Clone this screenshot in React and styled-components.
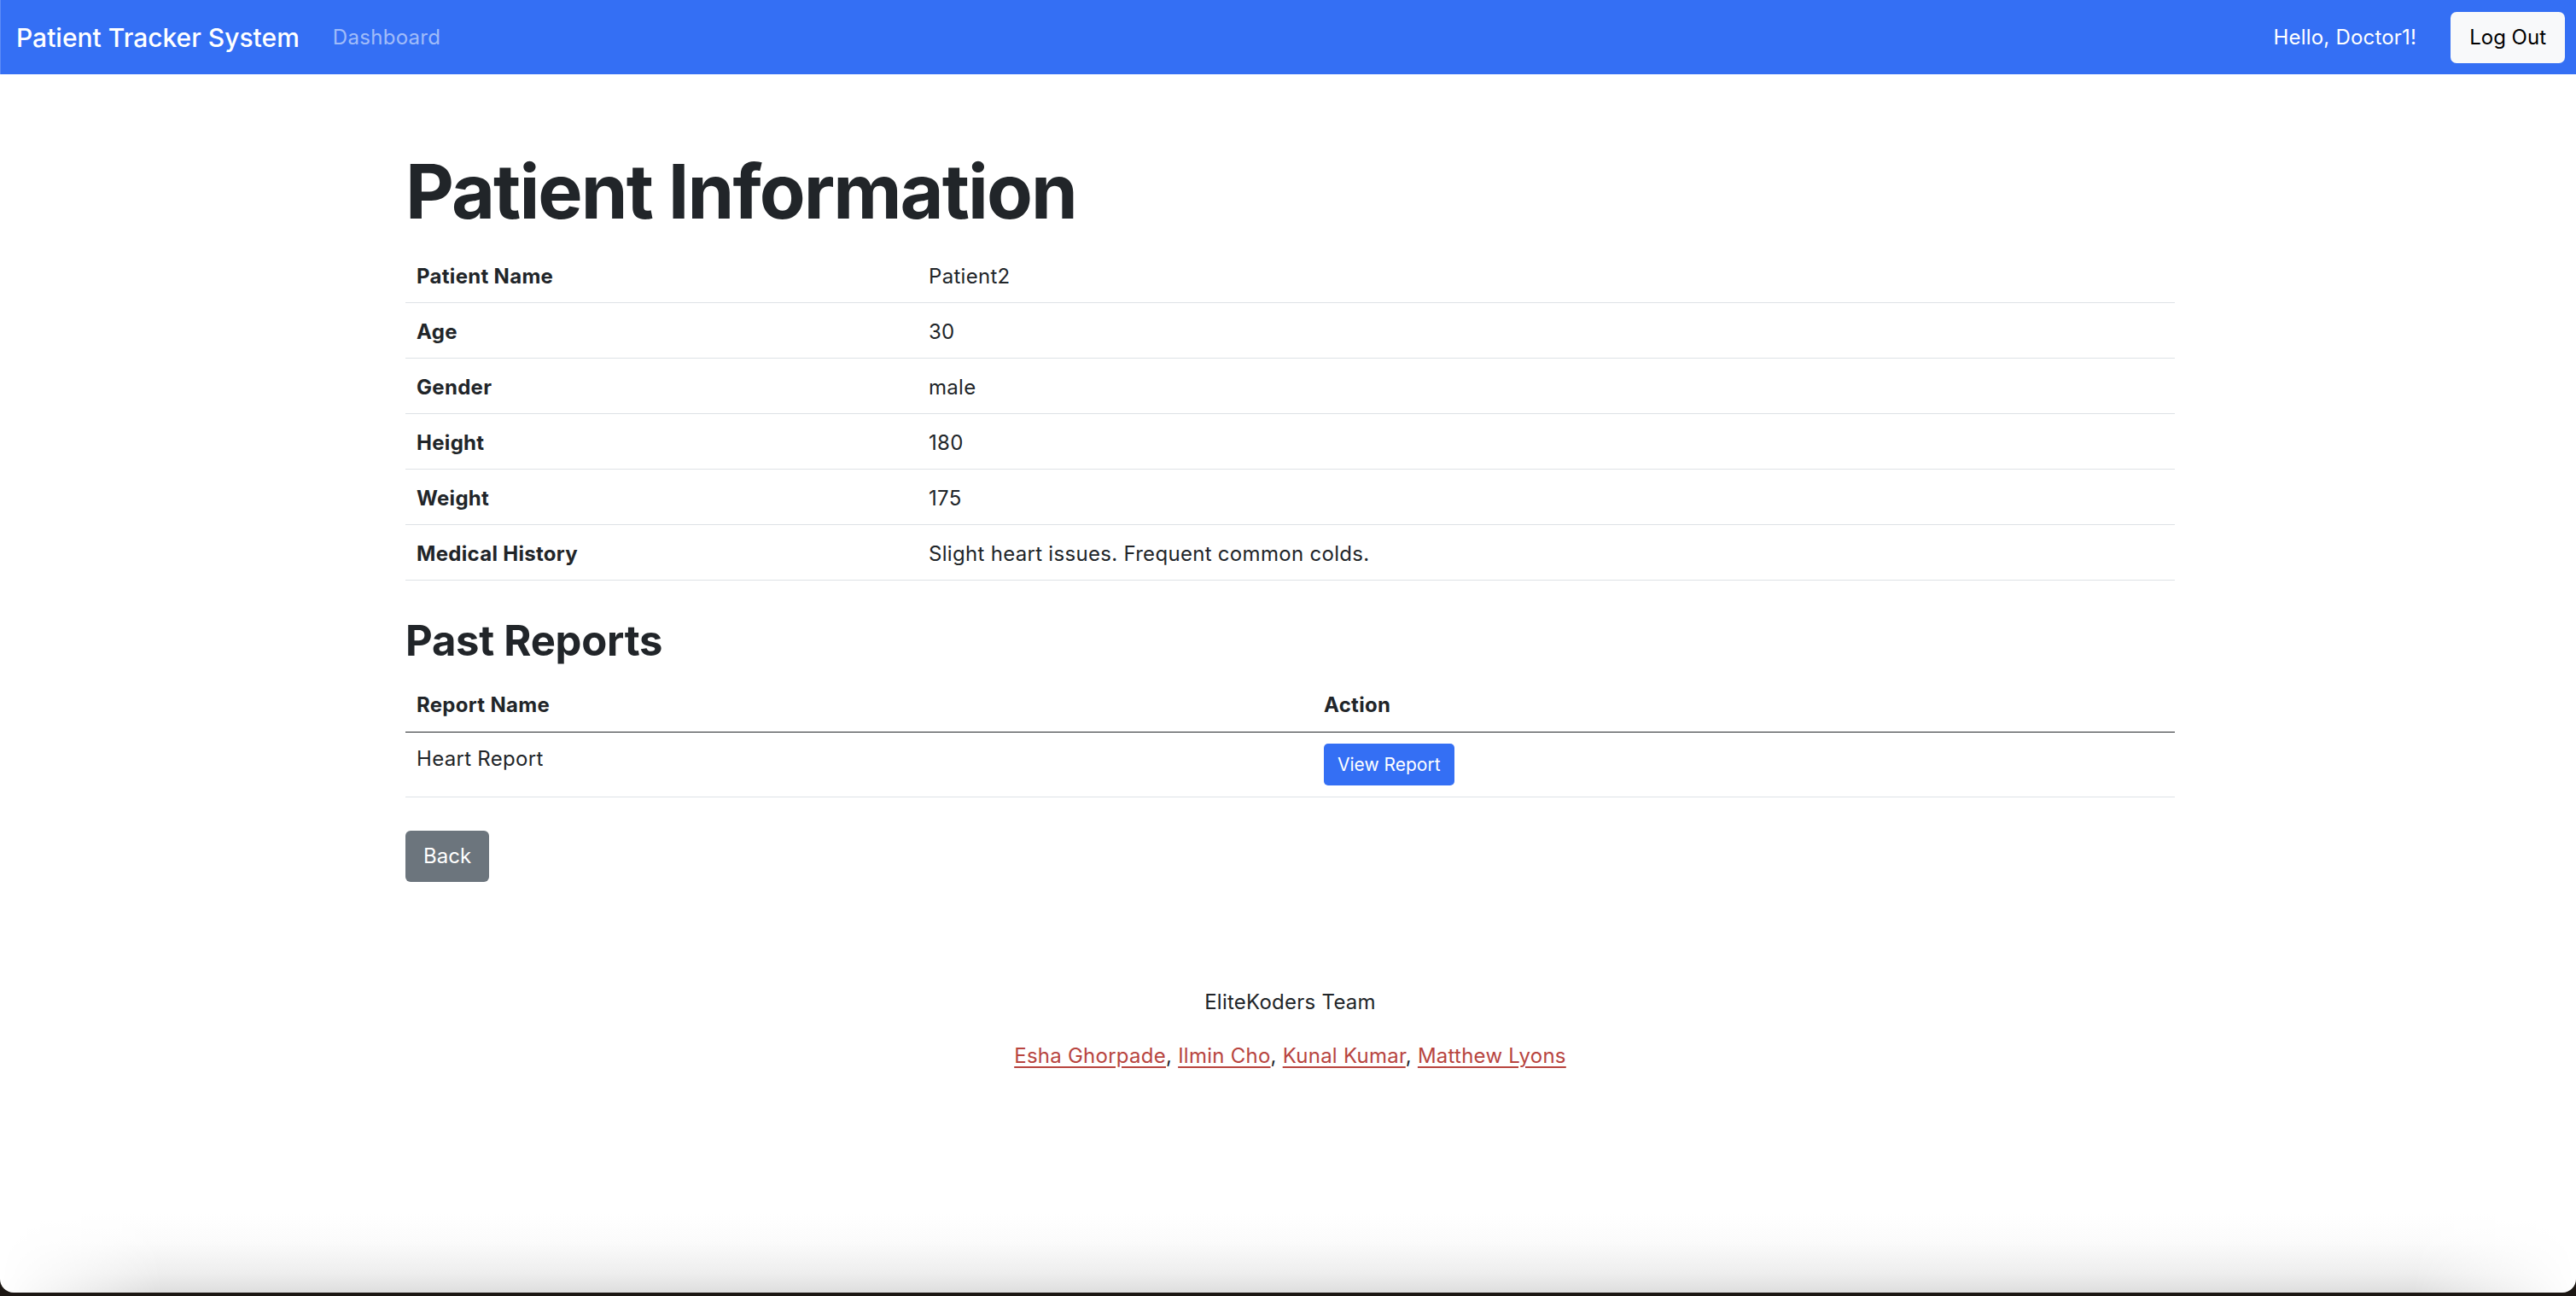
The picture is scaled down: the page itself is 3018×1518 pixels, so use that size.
import React from 'react';
import styled, { createGlobalStyle } from 'styled-components';

const GlobalStyle = createGlobalStyle`
    html, body {
        margin: 0;
        padding: 0;
        background: #1c1713;
    }

    body {
        font-family: Inter, "Noto Sans", "Liberation Sans", sans-serif;
        color: #212529;
    }

    *, *::before, *::after {
        box-sizing: border-box;
    }
`;

const Window = styled.div`
    min-height: 1514px;
    background: #ffffff;
    display: flex;
    flex-direction: column;
    border-radius: 0 0 16px 16px;
    overflow: hidden;
`;

const NavBar = styled.nav`
    height: 87px;
    background: #346ff4;
    display: flex;
    align-items: center;
    padding: 0 13px 0 18px;
    border-left: 1px solid #5b8af6;
`;

const Brand = styled.a`
    font-size: 30px;
    font-weight: 500;
    color: #ffffff;
    text-decoration: none;
    margin-right: 39px;
`;

const NavLink = styled.a`
    font-size: 24px;
    letter-spacing: 0.3px;
    color: rgba(255, 255, 255, 0.55);
    text-decoration: none;
`;

const Greeting = styled.span`
    margin-left: auto;
    margin-right: 40px;
    font-size: 24px;
    letter-spacing: 0.2px;
    color: #ffffff;
`;

const Button = styled.button`
    display: inline-flex;
    align-items: center;
    justify-content: center;
    border: none;
    font-family: inherit;
    cursor: pointer;
    height: ${(p) => p.$h}px;
    padding: 0 ${(p) => p.$px}px;
    font-size: ${(p) => p.$fs}px;
    border-radius: ${(p) => p.$r}px;
    background: ${(p) => p.$bg};
    color: ${(p) => p.$fg};
`;

const Container = styled.main`
    width: 100%;
    max-width: 2073px;
    margin: 0 auto 0 calc(50% - 1034px);
`;

const Title = styled.h1`
    margin: 85px 0 12px;
    font-size: 88px;
    font-weight: 700;
    line-height: 1.2;
    letter-spacing: -0.022em;
`;

const SectionTitle = styled.h2`
    margin: 42px 0 12px;
    font-size: 49px;
    font-weight: 700;
    line-height: 1.17;
    letter-spacing: -0.005em;
`;

const Table = styled.table`
    width: 100%;
    border-collapse: collapse;
    font-size: 24px;
    line-height: 36px;
    letter-spacing: 0.3px;
`;

const Row = styled.tr`
    border-bottom: 1px solid ${(p) => (p.$dark ? '#212529' : '#dee2e6')};
`;

const Cell = styled.td`
    padding: ${(p) => p.$pad || '16px 13px 12px'};
    text-align: left;
    vertical-align: top;
    font-weight: ${(p) => (p.$bold ? 700 : 400)};
    width: ${(p) => (p.$w ? `${p.$w}px` : 'auto')};
`;

const Footer = styled.footer`
    margin-top: 123px;
    text-align: center;
    font-size: 24px;
    line-height: 36px;
    letter-spacing: 0.25px;

    p {
        margin: 0 0 27px;
    }
`;

const TeamLink = styled.a`
    color: #b8453f;
    text-decoration: underline;
    text-underline-offset: 4px;
`;

const Filler = styled.div`
    flex: 1;
`;

const Shade = styled.div`
    height: 92px;
    background: linear-gradient(to bottom, #ffffff 0%, #fbfbfb 35%, #eeeeee 75%, #dedede 100%);
    -webkit-mask-image: linear-gradient(to right, transparent 0, #000 190px, #000 calc(100% - 190px), transparent 100%);
    mask-image: linear-gradient(to right, transparent 0, #000 190px, #000 calc(100% - 190px), transparent 100%);
`;

const info = [
    ['Patient Name', 'Patient2'],
    ['Age', '30'],
    ['Gender', 'male'],
    ['Height', '180'],
    ['Weight', '175'],
    ['Medical History', 'Slight heart issues. Frequent common colds.'],
];

const team = ['Esha Ghorpade', 'Ilmin Cho', 'Kunal Kumar', 'Matthew Lyons'];

const App = () => {
    return (
        <>
            <GlobalStyle />
            <Window>
                <NavBar>
                    <Brand href="#">Patient Tracker System</Brand>
                    <NavLink href="#">Dashboard</NavLink>
                    <Greeting>Hello, Doctor1!</Greeting>
                    <Button $h={60} $px={22} $fs={24} $r={7} $bg="#f8f9fa" $fg="#000000">
                        Log Out
                    </Button>
                </NavBar>

                <Container>
                    <Title>Patient Information</Title>
                    <Table>
                        <tbody>
                            {info.map(([label, value]) => (
                                <Row key={label}>
                                    <Cell as="th" $bold $w={600}>{label}</Cell>
                                    <Cell>{value}</Cell>
                                </Row>
                            ))}
                        </tbody>
                    </Table>

                    <SectionTitle>Past Reports</SectionTitle>
                    <Table>
                        <thead>
                            <Row $dark>
                                <Cell as="th" $bold $w={1063} $pad="17px 13px 13px">Report Name</Cell>
                                <Cell as="th" $bold $pad="17px 13px 13px">Action</Cell>
                            </Row>
                        </thead>
                        <tbody>
                            <Row>
                                <Cell $pad="13px">Heart Report</Cell>
                                <Cell $pad="13px">
                                    <Button $h={49} $px={16} $fs={21} $r={5} $bg="#346ff4" $fg="#ffffff">
                                        View Report
                                    </Button>
                                </Cell>
                            </Row>
                        </tbody>
                    </Table>

                    <div style={{ marginTop: 39 }}>
                        <Button $h={60} $px={21} $fs={24} $r={6} $bg="#6c757d" $fg="#ffffff">
                            Back
                        </Button>
                    </div>

                    <Footer>
                        <p>EliteKoders Team</p>
                        <p>
                            {team.map((name, i) => (
                                <React.Fragment key={name}>
                                    <TeamLink href="#">{name}</TeamLink>
                                    {i < team.length - 1 ? ', ' : ''}
                                </React.Fragment>
                            ))}
                        </p>
                    </Footer>
                </Container>

                <Filler />
                <Shade />
            </Window>
        </>
    );
};

export default App;
